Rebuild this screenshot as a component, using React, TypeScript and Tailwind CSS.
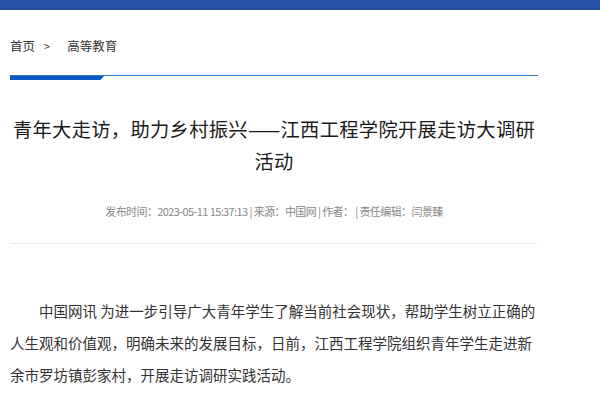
export default function App() {
  return (
    <div
      className="min-h-[400px] bg-white text-[#333]"
      style={{ fontFamily: '"Noto Sans CJK SC", "Noto Sans", sans-serif' }}
    >
      <div className="h-[10px] bg-[#2352a4] border-b border-[#1d4790]" />

      <div className="ml-[10px] w-[528px]">
        {/* breadcrumb */}
        <div className="mt-[26px] flex items-center h-[20px] text-[12.5px] leading-[20px] text-[#333]">
          <span>首页</span>
          <span className="ml-[9px] mr-[17px] text-[11px]">&gt;</span>
          <span>高等教育</span>
        </div>

        {/* blue rule */}
        <div className="mt-[19px]">
          <div className="h-px bg-[#2f7bd4]" />
          <div className="w-[94px] h-[4px] bg-[#0a5ac2] [clip-path:polygon(0_0,100%_0,96%_100%,0_100%)]" />
        </div>

        {/* title */}
        <h1 className="mt-[33px] text-center text-[19.3px] leading-[32px] tracking-[0.3px] text-[#1a1a1a] font-normal">
          青年大走访，助力乡村振兴——江西工程学院开展走访大调研活动
        </h1>

        {/* meta */}
        <div className="mt-[24px] text-center text-[11px] leading-[20px] tracking-[-0.6px] text-[#888]">
          发布时间：2023-05-11 15:37:13 | 来源：中国网 | 作者： | 责任编辑：闫景臻
        </div>

        <div className="mt-[22px] h-px bg-[#ebebeb]" />

        {/* body */}
        <p className="mt-[51px] text-[14.5px] leading-[32px] indent-[2em] text-[#333]">
          中国网讯 为进一步引导广大青年学生了解当前社会现状，帮助学生树立正确的人生观和价值观，明确未来的发展目标，日前，江西工程学院组织青年学生走进新余市罗坊镇彭家村，开展走访调研实践活动。
        </p>
      </div>
    </div>
  );
}
